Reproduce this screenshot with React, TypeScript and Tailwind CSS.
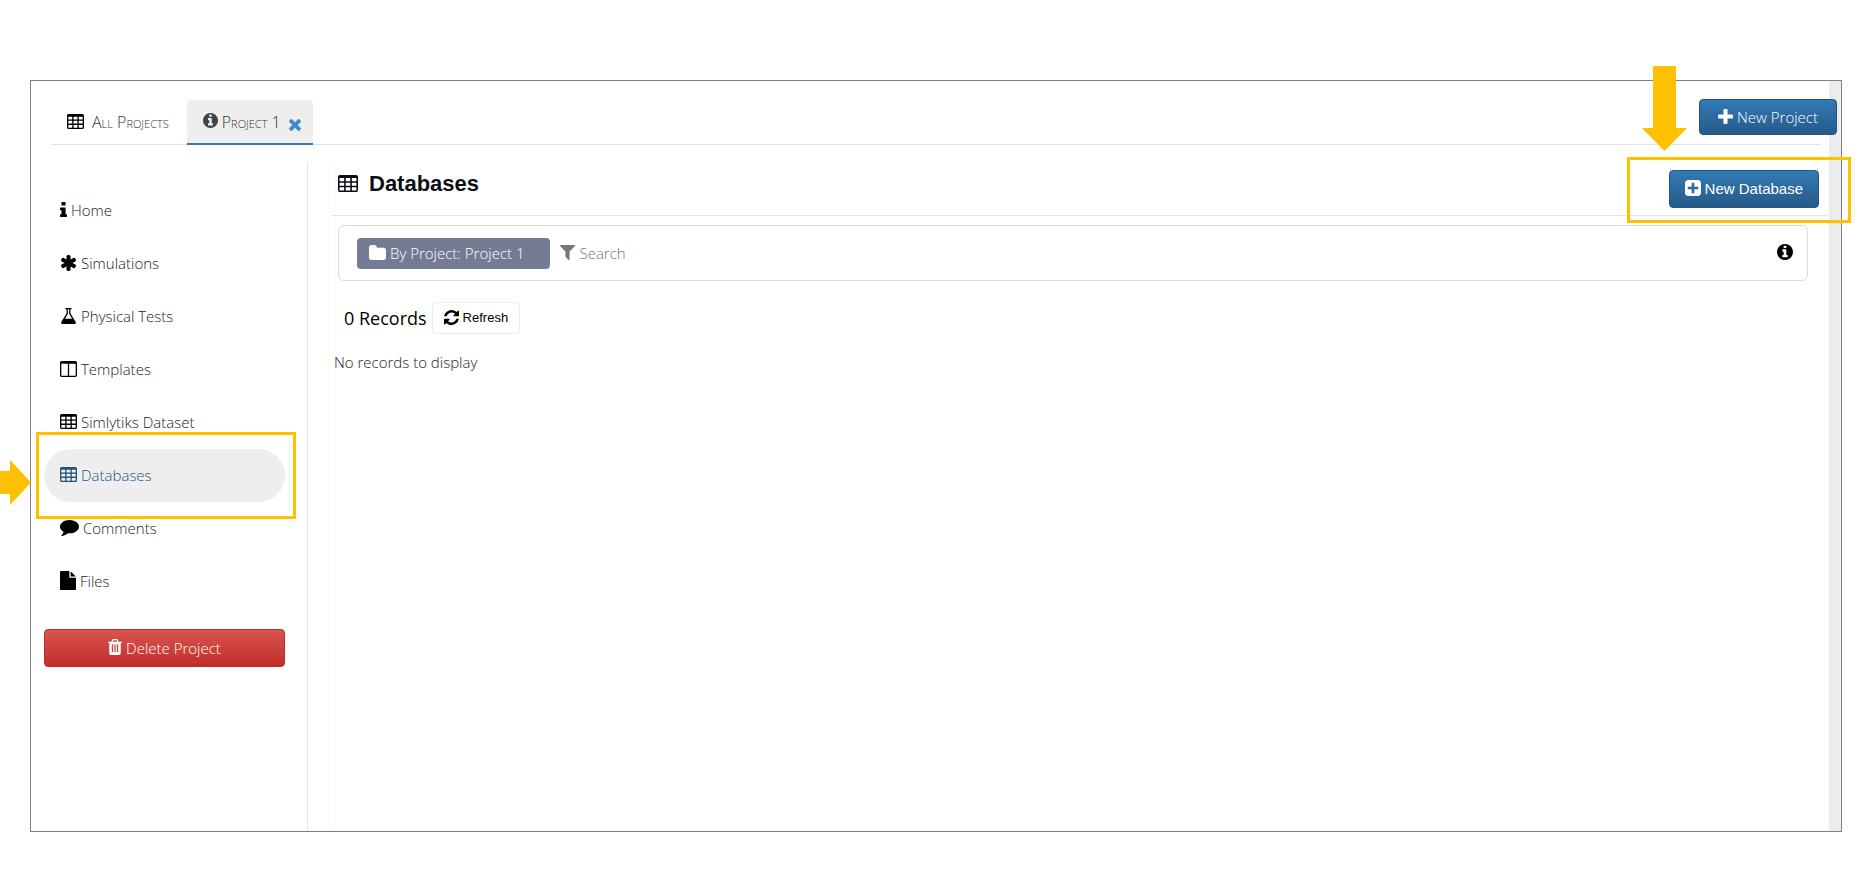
import React, { useState } from 'react';
import clsx from 'clsx';

type IconName =
  | 'table'
  | 'info'
  | 'infoCircle'
  | 'asterisk'
  | 'flask'
  | 'columns'
  | 'comment'
  | 'file'
  | 'trash'
  | 'folder'
  | 'filter'
  | 'refresh'
  | 'plus'
  | 'plusSquare'
  | 'times';

const ICONS: Record<IconName, { box: string; d: string }> = {
  table: {
    box: '64 128 1664 1408',
    d: 'M576 1376v-192q0-14-9-23t-23-9h-320q-14 0-23 9t-9 23v192q0 14 9 23t23 9h320q14 0 23-9t9-23zm0-384v-192q0-14-9-23t-23-9h-320q-14 0-23 9t-9 23v192q0 14 9 23t23 9h320q14 0 23-9t9-23zm512 384v-192q0-14-9-23t-23-9h-320q-14 0-23 9t-9 23v192q0 14 9 23t23 9h320q14 0 23-9t9-23zm-512-768v-192q0-14-9-23t-23-9h-320q-14 0-23 9t-9 23v192q0 14 9 23t23 9h320q14 0 23-9t9-23zm512 384v-192q0-14-9-23t-23-9h-320q-14 0-23 9t-9 23v192q0 14 9 23t23 9h320q14 0 23-9t9-23zm512 384v-192q0-14-9-23t-23-9h-320q-14 0-23 9t-9 23v192q0 14 9 23t23 9h320q14 0 23-9t9-23zm-512-768v-192q0-14-9-23t-23-9h-320q-14 0-23 9t-9 23v192q0 14 9 23t23 9h320q14 0 23-9t9-23zm512 384v-192q0-14-9-23t-23-9h-320q-14 0-23 9t-9 23v192q0 14 9 23t23 9h320q14 0 23-9t9-23zm0-384v-192q0-14-9-23t-23-9h-320q-14 0-23 9t-9 23v192q0 14 9 23t23 9h320q14 0 23-9t9-23zm128-320v1088q0 66-47 113t-113 47h-1344q-66 0-113-47t-47-113v-1088q0-66 47-113t113-47h1344q66 0 113 47t47 113z',
  },
  info: {
    box: '576 128 640 1408',
    d: 'M1216 1344v128q0 26-19 45t-45 19h-512q-26 0-45-19t-19-45v-128q0-26 19-45t45-19h64v-384h-64q-26 0-45-19t-19-45v-128q0-26 19-45t45-19h384q26 0 45 19t19 45v576h64q26 0 45 19t19 45zm-128-1152v192q0 26-19 45t-45 19h-256q-26 0-45-19t-19-45v-192q0-26 19-45t45-19h256q26 0 45 19t19 45z',
  },
  infoCircle: {
    box: '128 128 1536 1536',
    d: 'M1152 1376v-160q0-14-9-23t-23-9h-96v-512q0-14-9-23t-23-9h-320q-14 0-23 9t-9 23v160q0 14 9 23t23 9h96v320h-96q-14 0-23 9t-9 23v160q0 14 9 23t23 9h448q14 0 23-9t9-23zm-128-896v-160q0-14-9-23t-23-9h-192q-14 0-23 9t-9 23v160q0 14 9 23t23 9h192q14 0 23-9t9-23zm640 416q0 209-103 385.5t-279.5 279.5-385.5 103-385.5-103-279.5-279.5-103-385.5 103-385.5 279.5-279.5 385.5-103 385.5 103 279.5 279.5 103 385.5z',
  },
  asterisk: {
    box: '180 128 1432 1536',
    d: 'M1546 1050q46 26 59.5 77.5t-12.5 97.5l-64 110q-26 46-77.5 59.5t-97.5-12.5l-266-153v307q0 52-38 90t-90 38h-128q-52 0-90-38t-38-90v-307l-266 153q-46 26-97.5 12.5t-77.5-59.5l-64-110q-26-46-12.5-97.5t59.5-77.5l266-154-266-154q-46-26-59.5-77.5t12.5-97.5l64-110q26-46 77.5-59.5t97.5 12.5l266 153v-307q0-52 38-90t90-38h128q52 0 90 38t38 90v307l266-153q46-26 97.5-12.5t77.5 59.5l64 110q26 46 12.5 97.5t-59.5 77.5l-266 154z',
  },
  flask: {
    box: '160 128 1472 1536',
    d: 'M1591 1448q56 89 21.5 152.5t-140.5 63.5h-1152q-106 0-140.5-63.5t21.5-152.5l503-793v-399h-64q-26 0-45-19t-19-45 19-45 45-19h512q26 0 45 19t19 45-19 45-45 19h-64v399zm-779-725l-272 429h712l-272-429-20-31v-436h-128v436z',
  },
  columns: {
    box: '64 128 1664 1536',
    d: 'M224 1536h608v-1152h-640v1120q0 13 9.5 22.5t22.5 9.5zm1376-32v-1120h-640v1152h608q13 0 22.5-9.5t9.5-22.5zm128-1216v1216q0 66-47 113t-113 47h-1344q-66 0-113-47t-47-113v-1216q0-66 47-113t113-47h1344q66 0 113 47t47 113z',
  },
  comment: {
    box: '0 256 1792 1536',
    d: 'M1792 896q0 174-120 321.5t-326 233-450 85.5q-70 0-145-8-198 175-460 242-49 14-114 22-17 2-30.5-9t-17.5-29v-1q-3-4-.5-12t2-10 4.5-9.5l6-9 7-8.5 8-9q7-8 31-34.5t34.5-38 31-39.5 32.5-51 27-59 26-76q-157-89-247.5-220t-90.5-281q0-130 71-248.5t191-204.5 286-136.5 348-50.5q244 0 450 85.5t326 233 120 321.5z',
  },
  file: {
    box: '128 0 1536 1792',
    d: 'M1152 512v-472q22 14 36 28l408 408q14 14 28 36h-472zm-128 32q0 40 28 68t68 28h544v1056q0 40-28 68t-68 28h-1344q-40 0-68-28t-28-68v-1600q0-40 28-68t68-28h800v544z',
  },
  trash: {
    box: '192 128 1408 1536',
    d: 'M704 1376v-704q0-14-9-23t-23-9h-64q-14 0-23 9t-9 23v704q0 14 9 23t23 9h64q14 0 23-9t9-23zm256 0v-704q0-14-9-23t-23-9h-64q-14 0-23 9t-9 23v704q0 14 9 23t23 9h64q14 0 23-9t9-23zm256 0v-704q0-14-9-23t-23-9h-64q-14 0-23 9t-9 23v704q0 14 9 23t23 9h64q14 0 23-9t9-23zm-544-992h448l-48-117q-7-9-17-11h-317q-10 2-17 11zm928 32v64q0 14-9 23t-23 9h-96v948q0 83-47 143.5t-113 60.5h-832q-66 0-113-58.5t-47-141.5v-952h-96q-14 0-23-9t-9-23v-64q0-14 9-23t23-9h309l70-167q15-37 54-63t79-26h320q40 0 79 26t54 63l70 167h309q14 0 23 9t9 23z',
  },
  folder: {
    box: '64 128 1664 1408',
    d: 'M1728 608v704q0 92-66 158t-158 66h-1216q-92 0-158-66t-66-158v-960q0-92 66-158t158-66h320q92 0 158 66t66 158v32h672q92 0 158 66t66 158z',
  },
  filter: {
    box: '190 256 1412 1408',
    d: 'M1595 295q17 41-14 70l-493 493v742q0 42-39 59-13 5-25 5-27 0-45-19l-256-256q-19-19-19-45v-486l-493-493q-31-29-14-70 17-39 59-39h1280q42 0 59 39z',
  },
  refresh: {
    box: '128 128 1536 1536',
    d: 'M1639 1056q0 5-1 7-64 268-268 434.5t-478 166.5q-146 0-282.5-55t-243.5-157l-129 129q-19 19-45 19t-45-19-19-45v-448q0-26 19-45t45-19h448q26 0 45 19t19 45-19 45l-137 137q71 66 161 102t187 36q134 0 250-65t186-179q11-17 53-117 8-23 30-23h192q13 0 22.5 9.5t9.5 22.5zm25-800v448q0 26-19 45t-45 19h-448q-26 0-45-19t-19-45 19-45l138-138q-148-137-349-137-134 0-250 65t-186 179q-11 17-53 117-8 23-30 23h-199q-13 0-22.5-9.5t-9.5-22.5v-7q65-268 270-434.5t480-166.5q146 0 284 55.5t245 156.5l130-129q19-19 45-19t45 19 19 45z',
  },
  plus: {
    box: '192 128 1408 1408',
    d: 'M1600 736v192q0 40-28 68t-68 28h-416v416q0 40-28 68t-68 28h-192q-40 0-68-28t-28-68v-416h-416q-40 0-68-28t-28-68v-192q0-40 28-68t68-28h416v-416q0-40 28-68t68-28h192q40 0 68 28t28 68v416h416q40 0 68 28t28 68z',
  },
  plusSquare: {
    box: '128 128 1536 1536',
    d: 'M1408 960v-128q0-26-19-45t-45-19h-320v-320q0-26-19-45t-45-19h-128q-26 0-45 19t-19 45v320h-320q-26 0-45 19t-19 45v128q0 26 19 45t45 19h320v320q0 26 19 45t45 19h128q26 0 45-19t19-45v-320h320q26 0 45-19t19-45zm256-544v960q0 119-84.5 203.5t-203.5 84.5h-960q-119 0-203.5-84.5t-84.5-203.5v-960q0-119 84.5-203.5t203.5-84.5h960q119 0 203.5 84.5t84.5 203.5z',
  },
  times: {
    box: '302 366 1188 1188',
    d: 'M1490 1322q0 40-28 68l-136 136q-28 28-68 28t-68-28l-294-294-294 294q-28 28-68 28t-68-28l-136-136q-28-28-28-68t28-68l294-294-294-294q-28-28-28-68t28-68l136-136q28-28 68-28t68 28l294 294 294-294q28-28 68-28t68 28l136 136q28 28 28 68t-28 68l-294 294 294 294q28 28 28 68z',
  },
};

const Icon = ({ name, className }: { name: IconName; className: string }) => (
  <svg
    viewBox={ICONS[name].box}
    preserveAspectRatio="none"
    fill="currentColor"
    aria-hidden="true"
    className={clsx('mb-[2px] shrink-0', className)}
  >
    <path d={ICONS[name].d} />
  </svg>
);

const NAV_ITEMS: { label: string; icon: IconName; size: string }[] = [
  { label: 'Home', icon: 'info', size: 'w-[7px] h-[15px]' },
  { label: 'Simulations', icon: 'asterisk', size: 'w-[17px] h-4 px-px' },
  { label: 'Physical Tests', icon: 'flask', size: 'w-[17px] h-4 px-px' },
  { label: 'Templates', icon: 'columns', size: 'w-[17px] h-4' },
  { label: 'Simlytiks Dataset', icon: 'table', size: 'w-[17px] h-[15px]' },
  { label: 'Databases', icon: 'table', size: 'w-[17px] h-[15px]' },
  { label: 'Comments', icon: 'comment', size: 'w-[19px] h-4' },
  { label: 'Files', icon: 'file', size: 'w-4 h-[19px]' },
];

const PRIMARY_BUTTON =
  'flex items-center rounded border border-[#245580] bg-gradient-to-b from-[#337ab7] to-[#265a88] text-white';

const Sidebar = () => {
  const [active, setActive] = useState('Databases');

  return (
    <aside className="w-[277px] shrink-0 border-r border-[#e4e4e4] pt-[22px] pr-[22px] pl-[13px]">
      <nav>
        <ul>
          {NAV_ITEMS.map(item => (
            <li key={item.label} className="relative">
              <a
                href="#"
                onClick={() => setActive(item.label)}
                className={clsx(
                  'flex h-[53px] items-center gap-1 rounded-full pl-4',
                  active === item.label ? 'bg-[#eeeeee] text-[#23527c]' : 'text-black'
                )}
              >
                <Icon name={item.icon} className={item.size} />
                <span className={active === item.label ? 'text-[#23527c]' : 'text-[#222]'}>{item.label}</span>
              </a>
              {item.label === 'Databases' && (
                <>
                  <div className="pointer-events-none absolute -top-[17px] -right-[11px] -bottom-[17px] -left-2 border-3 border-[#ffc000]" />
                  <svg
                    viewBox="0 0 31 45"
                    fill="#ffc000"
                    aria-hidden="true"
                    className="pointer-events-none absolute top-[11px] -left-11 h-[45px] w-[31px]"
                  >
                    <path d="M0 11h10V0l21 22.500L10 45V34H0z" />
                  </svg>
                </>
              )}
            </li>
          ))}
        </ul>
      </nav>
      <button
        type="button"
        className="mt-[21px] flex h-[38px] w-full items-center justify-center gap-1 rounded border border-[#b92c28] bg-gradient-to-b from-[#d9534f] to-[#c12e2a] text-white"
      >
        <Icon name="trash" className="h-4 w-[14px]" />
        Delete Project
      </button>
    </aside>
  );
};

const Header = () => (
  <header className="ml-5 flex h-16 items-start justify-between border-b border-[#e2e2e2] pt-[18px]">
    <div className="flex self-end text-base">
      <a href="#" className="flex h-11 items-center gap-2 pr-[18px] pl-4 text-[#333] [font-variant:small-caps]">
        <Icon name="table" className="h-[15px] w-[17px] text-black" />
        All Projects
      </a>
      <div className="-mb-px flex h-[45px] items-center rounded-t border-b-2 border-[#337ab7] bg-[#eeeeee] pr-3 pl-4">
        <a href="#" className="flex items-center gap-1 text-[#333] [font-variant:small-caps]">
          <Icon name="infoCircle" className="size-[15px] text-[#444]" />
          Project 1
        </a>
        <button type="button" aria-label="Close Project 1" className="mt-2 ml-2 text-[#428bca]">
          <Icon name="times" className="size-3" />
        </button>
      </div>
    </div>
    <button type="button" className={clsx(PRIMARY_BUTTON, 'relative z-10 -mr-4 h-9 gap-1 px-[18px]')}>
      <Icon name="plus" className="size-[15px]" />
      New Project
    </button>
  </header>
);

const DatabasePanel = () => (
  <main className="ml-[21px] flex-1 border-x border-[#fafafa]">
    <div className="mr-px ml-[2px] flex h-[54px] items-start justify-between border-b border-[#e4e4e4] pr-2 pl-[6px]">
      <h1 className='flex items-center gap-[11px] pt-[6px] font-["Liberation_Sans"] text-[22px] leading-8 font-bold text-[#0b0f14]'>
        <Icon name="table" className="h-[17px] w-5" />
        Databases
      </h1>
      <div className="relative pt-2">
        <button
          type="button"
          className={clsx(PRIMARY_BUTTON, 'h-[38px] gap-1 px-[15px] font-["Liberation_Sans"] text-[15px] font-normal')}
        >
          <Icon name="plusSquare" className="size-4" />
          New Database
        </button>
        <div className="pointer-events-none absolute -top-[5px] -right-8 -bottom-[15px] -left-[42px] border-3 border-[#ffc000]" />
        <svg
          viewBox="0 0 45 85"
          fill="#ffc000"
          aria-hidden="true"
          className="pointer-events-none absolute -top-24 -left-[27px] h-[85px] w-[45px]"
        >
          <path d="M11 0h23v62h11L22.500 85 0 62h11z" />
        </svg>
      </div>
    </div>

    <div className="mt-[9px] mr-5 ml-2 flex h-[56px] items-center rounded-md border border-[#dcdcdc] pr-[14px] pl-[18px]">
      <button
        type="button"
        className="flex h-[31px] shrink-0 items-center gap-1 rounded bg-[#737c93] pr-[26px] pl-3 text-white"
      >
        <Icon name="folder" className="h-[15px] w-[17px]" />
        By Project: Project 1
      </button>
      <label htmlFor="search" className="ml-[10px] text-[#777]">
        <Icon name="filter" className="size-[15px]" />
      </label>
      <input
        id="search"
        type="text"
        aria-label="Search databases"
        placeholder="Search"
        className="ml-1 min-w-0 flex-1 font-light outline-none placeholder:text-[#777]"
      />
      <button type="button" aria-label="Search help" className="text-black">
        <Icon name="infoCircle" className="size-4" />
      </button>
    </div>

    <div className="mt-[21px] ml-[14px] flex items-center gap-[5px]">
      <span className="text-lg font-normal text-black">0 Records</span>
      <button
        type="button"
        className='flex h-8 items-center gap-1 rounded border border-[#ececec] px-[11px] font-["Liberation_Sans"] text-[13px] font-normal text-black'
      >
        <Icon name="refresh" className="size-[15px]" />
        Refresh
      </button>
    </div>
    <p className="mt-4 ml-1 leading-6 text-[#222]">No records to display</p>
  </main>
);

const App = () => (
  <div className='bg-white py-20 pr-[29px] pl-[30px] font-["Open_Sans",sans-serif] text-[15px] font-light'>
    <div className="flex min-h-[752px] border border-[#7f7f7f]">
      <div className="flex min-w-0 flex-1 flex-col">
        <div className="mr-2">
          <Header />
        </div>
        <div className="mt-[17px] flex flex-1">
          <Sidebar />
          <DatabasePanel />
        </div>
      </div>
      <div className="w-3 bg-[#ececec]" />
    </div>
  </div>
);

export default App;
